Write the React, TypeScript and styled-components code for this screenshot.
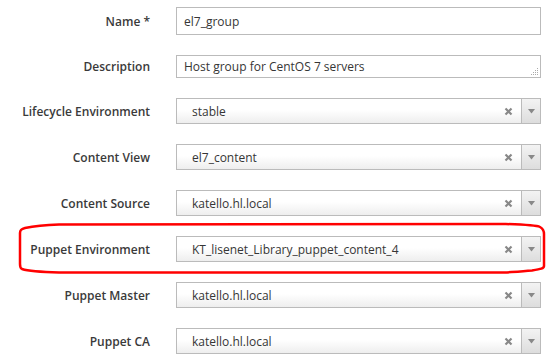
import React from 'react';
import styled, { createGlobalStyle } from 'styled-components';

const GlobalStyle = createGlobalStyle`
  html, body {
    margin: 0;
    padding: 0;
    background: #fff;
  }
  body {
    font-family: "Open Sans", "Liberation Sans", sans-serif;
    font-size: 12px;
    color: #363636;
  }
`;

const Root = styled.div`
  position: relative;
  width: 549px;
  height: 362px;
  overflow: hidden;
  padding-top: 7px;
  box-sizing: border-box;

  display: flex;
  flex-direction: column;
  row-gap: 20px;
`;

const Row = styled.div`
  display: flex;
  align-items: center;
  column-gap: 26px;
`;

const Label = styled.label`
  width: 150px;
  text-align: right;
  font-weight: 600;
  font-size: 12px;
  color: #3a3a3a;
  white-space: nowrap;
`;

const TextInput = styled.div`
  width: 365px;
  height: 28px;
  box-sizing: border-box;
  border: 1px solid #bbb;
  padding: 0 7px;
  display: flex;
  align-items: center;
  font-size: 12px;
  background: #fff;
`;

const TextArea = styled(TextInput)`
  position: relative;
  height: 23px;
  padding-bottom: 1px;
`;

const Grip = styled.svg`
  position: absolute;
  right: 1px;
  bottom: 1px;
`;

const Select = styled.div`
  width: 365px;
  height: 26px;
  box-sizing: border-box;
  border: 1px solid #bbb;
  display: flex;
  align-items: stretch;
  background: linear-gradient(to bottom, #fff 0%, #fff 45%, #eee 100%);
`;

const Value = styled.div`
  flex: 1;
  display: flex;
  align-items: center;
  padding-left: 15px;
  font-size: 12px;
  white-space: nowrap;
`;

const Clear = styled.div`
  width: 26px;
  display: flex;
  align-items: center;
  justify-content: center;
`;

const Arrow = styled.div`
  width: 18px;
  border-left: 1px solid #bbb;
  display: flex;
  align-items: center;
  justify-content: center;
  background: linear-gradient(to bottom, #f3f3f3 0%, #ddd 100%);
`;

const Highlight = styled.svg`
  position: absolute;
  left: 0;
  top: 0;
  pointer-events: none;
`;

function SelectBox({ value }: { value: string }) {
  return (
    <Select>
      <Value>{value}</Value>
      <Clear>
        <svg width="9" height="9" viewBox="0 0 9 9">
          <path d="M1.5 1.5 L7.5 7.5 M7.5 1.5 L1.5 7.5" stroke="#888" strokeWidth="2.2" />
        </svg>
      </Clear>
      <Arrow>
        <svg width="7" height="5" viewBox="0 0 7 5">
          <path d="M0 0 H7 L3.5 4.5 Z" fill="#888" />
        </svg>
      </Arrow>
    </Select>
  );
}

const selects = [
  ['Lifecycle Environment', 'stable'],
  ['Content View', 'el7_content'],
  ['Content Source', 'katello.hl.local'],
  ['Puppet Environment', 'KT_lisenet_Library_puppet_content_4'],
  ['Puppet Master', 'katello.hl.local'],
  ['Puppet CA', 'katello.hl.local'],
];

export default function App() {
  return (
    <Root>
      <GlobalStyle />
      <Row>
        <Label>Name *</Label>
        <TextInput>el7_group</TextInput>
      </Row>
      <Row>
        <Label>Description</Label>
        <TextArea>
          Host group for CentOS 7 servers
          <Grip width="8" height="8" viewBox="0 0 8 8">
            <g fill="#aaa">
              <rect x="6" y="0" width="1" height="1" />
              <rect x="4" y="2" width="1" height="1" />
              <rect x="6" y="2" width="1" height="1" />
              <rect x="2" y="4" width="1" height="1" />
              <rect x="4" y="4" width="1" height="1" />
              <rect x="6" y="4" width="1" height="1" />
              <rect x="0" y="6" width="1" height="1" />
              <rect x="2" y="6" width="1" height="1" />
              <rect x="4" y="6" width="1" height="1" />
              <rect x="6" y="6" width="1" height="1" />
            </g>
          </Grip>
        </TextArea>
      </Row>
      {selects.map(([label, value]) => (
        <Row key={label}>
          <Label>{label}</Label>
          <SelectBox value={value} />
        </Row>
      ))}
      <Highlight width="549" height="362" viewBox="0 0 549 362">
        <path
          d="M59 224.5 L505 224 C520 224.5 536 225 540 227 C543.5 229 544 231 544 234 L544 266 C544 268.5 541 269 532 270.5 C522 271.5 512 272 505 272.5 L59 272.5 C40 272 28 271 22 269 C20 268 20 266 20 264 L20 233 C20 230 21 229 25 228 C35 226 47 225 59 224.5 Z"
          fill="none"
          stroke="#f00"
          strokeWidth="2.5"
        />
      </Highlight>
    </Root>
  );
}
